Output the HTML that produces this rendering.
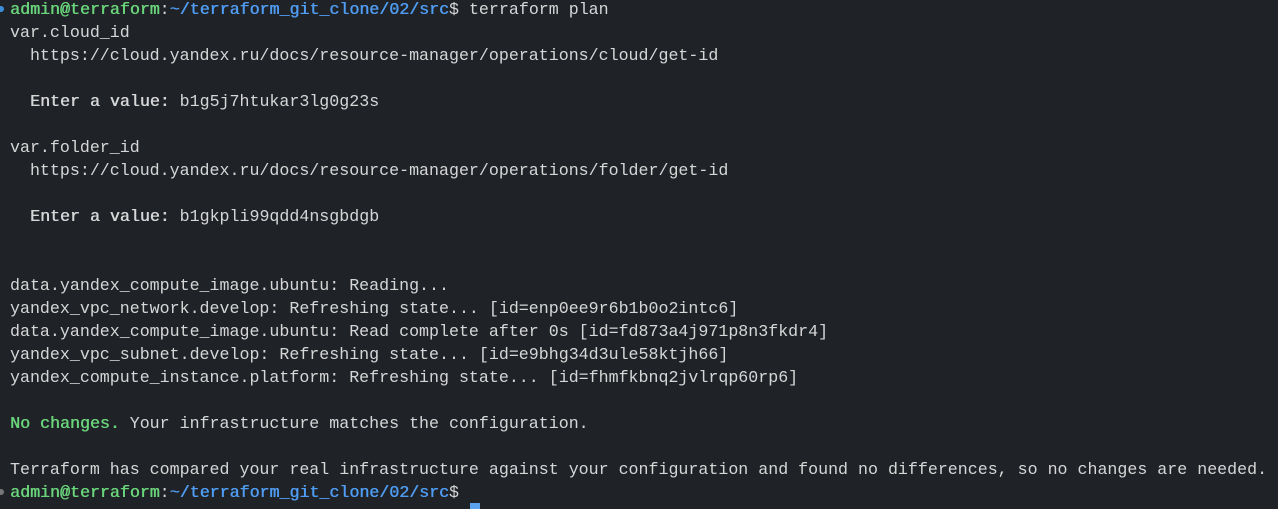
<!DOCTYPE html>
<html><head><meta charset="utf-8"><style>
html,body{margin:0;padding:0;background:#1f2328;width:1278px;height:508px;overflow:hidden}
pre{margin:0;position:absolute;left:10px;top:-2px;font-family:"Liberation Mono",monospace;font-size:16.64px;line-height:23px;color:#d6d6d6;white-space:pre}
.g{color:#6ad47a;text-shadow:0.5px 0 0 #6ad47a}
.b{color:#4f9cf2;text-shadow:0.5px 0 0 #4f9cf2}
.w{text-shadow:0.5px 0 0 #d6d6d6}
.dot{position:absolute;left:-2px;width:6px;height:6px;border-radius:50%}
.cur{position:absolute;left:470px;top:503px;width:10px;height:6px;background:#5aa2f0}
</style></head><body>
<div class="dot" style="top:6px;background:#3b8fd8"></div>
<div class="dot" style="top:489px;background:#777;"></div>
<pre><span class="g">admin@terraform</span>:<span class="b">~/terraform_git_clone/02/src</span>$ terraform plan
var.cloud_id
  https://cloud.yandex.ru/docs/resource-manager/operations/cloud/get-id

  <span class="w">Enter a value:</span> b1g5j7htukar3lg0g23s

var.folder_id
  https://cloud.yandex.ru/docs/resource-manager/operations/folder/get-id

  <span class="w">Enter a value:</span> b1gkpli99qdd4nsgbdgb


data.yandex_compute_image.ubuntu: Reading...
yandex_vpc_network.develop: Refreshing state... [id=enp0ee9r6b1b0o2intc6]
data.yandex_compute_image.ubuntu: Read complete after 0s [id=fd873a4j971p8n3fkdr4]
yandex_vpc_subnet.develop: Refreshing state... [id=e9bhg34d3ule58ktjh66]
yandex_compute_instance.platform: Refreshing state... [id=fhmfkbnq2jvlrqp60rp6]

<span class="g">No changes.</span> Your infrastructure matches the configuration.

Terraform has compared your real infrastructure against your configuration and found no differences, so no changes are needed.
<span class="g">admin@terraform</span>:<span class="b">~/terraform_git_clone/02/src</span>$</pre>
<div class="cur"></div>
</body></html>
